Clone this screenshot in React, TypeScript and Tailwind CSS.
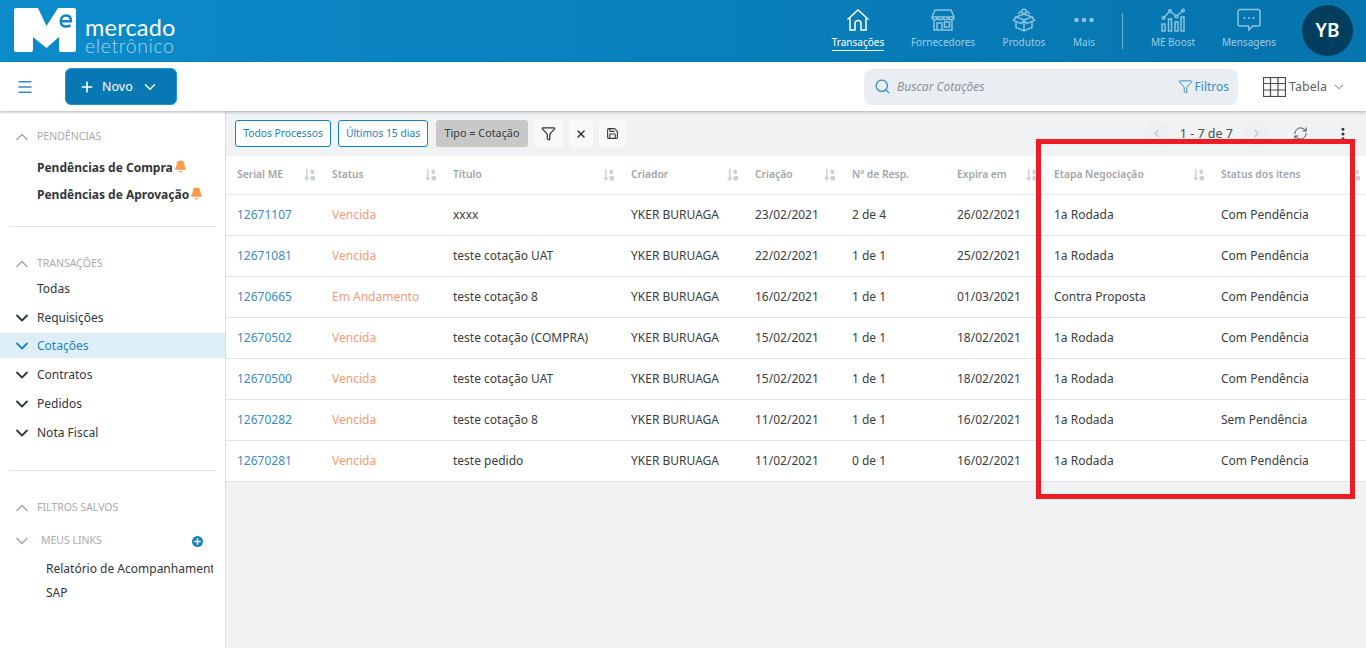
import React from 'react';
import {
  Menu,
  Plus,
  ChevronDown,
  ChevronUp,
  ChevronLeft,
  ChevronRight,
  Search,
  Funnel,
  X,
  Save,
  RefreshCw,
  EllipsisVertical,
  Bell,
} from 'lucide-react';

const rows = [
  ['12671107', 'Vencida', 'xxxx', '23/02/2021', '2 de 4', '26/02/2021', '1a Rodada', 'Com Pendência'],
  ['12671081', 'Vencida', 'teste cotação UAT', '22/02/2021', '1 de 1', '25/02/2021', '1a Rodada', 'Com Pendência'],
  ['12670665', 'Em Andamento', 'teste cotação 8', '16/02/2021', '1 de 1', '01/03/2021', 'Contra Proposta', 'Com Pendência'],
  ['12670502', 'Vencida', 'teste cotação (COMPRA)', '15/02/2021', '1 de 1', '18/02/2021', '1a Rodada', 'Com Pendência'],
  ['12670500', 'Vencida', 'teste cotação UAT', '15/02/2021', '1 de 1', '18/02/2021', '1a Rodada', 'Com Pendência'],
  ['12670282', 'Vencida', 'teste cotação 8', '11/02/2021', '1 de 1', '16/02/2021', '1a Rodada', 'Sem Pendência'],
  ['12670281', 'Vencida', 'teste pedido', '11/02/2021', '0 de 1', '16/02/2021', '1a Rodada', 'Com Pendência'],
];

const columns = [
  { label: 'Serial ME', sort: true },
  { label: 'Status', sort: true },
  { label: 'Título', sort: true },
  { label: 'Criador', sort: true },
  { label: 'Criação', sort: true },
  { label: 'Nº de Resp.', sort: false },
  { label: 'Expira em', sort: true },
  { label: 'Etapa Negociação', sort: true },
  { label: 'Status dos itens', sort: true },
];

const gridCols = 'grid grid-cols-[95px_121px_178px_124px_97px_105px_97px_167px_156px]';

const LogoMark = () => (
  <svg width="64" height="46" viewBox="0 0 64 46" className="shrink-0">
    <path
      d="M3 1H25L33.5 19L45 1H61a2 2 0 0 1 2 2V43a2 2 0 0 1-2 2H48a2 2 0 0 1-2-2V30L33.5 41L20 30V43a2 2 0 0 1-2 2H3a2 2 0 0 1-2-2V3a2 2 0 0 1 2-2Z"
      fill="#fff"
    />
    <path
      d="M47.8 14.2H58C58 10.5 56 8.5 53 8.5C49.9 8.5 47.8 10.7 47.8 14C47.8 17.5 50 19.6 53.2 19.6C55 19.6 56.4 19.1 57.4 18.3"
      fill="none"
      stroke="#0b87c6"
      strokeWidth="2.5"
    />
  </svg>
);

const HomeIcon = () => (
  <svg width="24" height="24" viewBox="0 0 24 24" fill="none" stroke="#fff" strokeWidth="1.5">
    <path d="M1.5 11.5L12 2L22.5 11.5" />
    <path d="M4 10V22H9V15.5a3 3 0 0 1 6 0V22H20V10" />
  </svg>
);

const StoreIcon = () => (
  <svg width="24" height="24" viewBox="0 0 24 24" fill="none" stroke="#8cc3e0" strokeWidth="1.5">
    <path d="M4 2H20L23 9H1Z" />
    <path d="M1 9a2.7 2.7 0 0 0 5.5 0a2.7 2.7 0 0 0 5.5 0a2.7 2.7 0 0 0 5.5 0a2.7 2.7 0 0 0 5.5 0" />
    <path d="M3 12V22H21V12" />
    <path d="M6 22V15H11V22M13.5 14H18.5V19H13.5Z" />
  </svg>
);

const BoxIcon = () => (
  <svg width="24" height="24" viewBox="0 0 24 24" fill="none" stroke="#8cc3e0" strokeWidth="1.5">
    <path d="M4 9L12 12L20 9L12 6Z" />
    <path d="M4 9L1.5 12.5L9.5 15.5L12 12L14.5 15.5L22.5 12.5L20 9" />
    <path d="M4 14V19.5L12 23L20 19.5V14M12 12V23" />
    <circle cx="12" cy="3.5" r="2.2" />
    <path d="M6 6L9 3M18 6L15 3" />
  </svg>
);

const BoostIcon = () => (
  <svg width="24" height="24" viewBox="0 0 24 24" fill="none" stroke="#8cc3e0" strokeWidth="1.5">
    <circle cx="2.5" cy="10" r="1.3" />
    <circle cx="9" cy="3" r="1.3" />
    <circle cx="15.5" cy="8.5" r="1.3" />
    <circle cx="22" cy="2.5" r="1.3" />
    <path d="M3.5 9L8 4M10 4L14.5 7.5M16.5 7.5L21 3.5" />
    <rect x="1" y="16" width="3" height="7" />
    <rect x="7.5" y="11" width="3" height="12" />
    <rect x="14" y="14" width="3" height="9" />
    <rect x="20" y="9" width="3" height="14" />
  </svg>
);

const MessageIcon = () => (
  <svg width="24" height="24" viewBox="0 0 24 24" fill="none" stroke="#8cc3e0" strokeWidth="1.5">
    <path d="M3 1.5H21a2 2 0 0 1 2 2V16a2 2 0 0 1-2 2H15.5L12 22L11.5 18H3a2 2 0 0 1-2-2V3.5a2 2 0 0 1 2-2Z" />
    <circle cx="7.5" cy="10" r="1.1" fill="#8cc3e0" stroke="none" />
    <circle cx="12" cy="10" r="1.1" fill="#8cc3e0" stroke="none" />
    <circle cx="16.5" cy="10" r="1.1" fill="#8cc3e0" stroke="none" />
  </svg>
);

const DotsIcon = () => (
  <svg width="24" height="24" viewBox="0 0 24 24" fill="#8cc3e0">
    <circle cx="4.5" cy="12" r="2.3" />
    <circle cx="12" cy="12" r="2.3" />
    <circle cx="19.5" cy="12" r="2.3" />
  </svg>
);

const SortIcon = () => (
  <svg width="11" height="12" viewBox="0 0 11 12" fill="#cfd1d4" className="shrink-0">
    <path d="M2 0H3.5V8.5H5.5L2.75 12L0 8.5H2Z" />
    <rect x="6.5" y="0.5" width="3.5" height="4.5" rx="1.5" />
    <rect x="6.5" y="7" width="4.5" height="4.5" rx="1" />
  </svg>
);

const TableIcon = () => (
  <svg width="23" height="20" viewBox="0 0 23 20" fill="none" stroke="#4b4b55" strokeWidth="1.2">
    <rect x="0.5" y="0.5" width="22" height="19" />
    <path d="M0.5 6.5H22.5M0.5 13H22.5M7.5 0.5V19.5M15 0.5V19.5" />
  </svg>
);

const NavItem = ({
  icon,
  label,
  width,
  active,
}: {
  icon: React.ReactNode;
  label: string;
  width: string;
  active?: boolean;
}) => (
  <div className={`flex flex-col items-center ${width}`}>
    <div className="h-[24px] mt-[8px]">{icon}</div>
    <span
      className={`mt-[3px] text-[10px] leading-[15px] whitespace-nowrap ${
        active ? 'text-white border-b border-white' : 'text-[#9ccbe5]'
      }`}
    >
      {label}
    </span>
  </div>
);

const SectionTitle = ({ label, className = '' }: { label: string; className?: string }) => (
  <div className={`flex items-center h-[20px] pl-[12px] ${className}`}>
    <ChevronUp size={20} strokeWidth={2} className="text-[#a9abaf]" />
    <span className="ml-[5px] text-[10.5px] text-[#a9abaf]">{label}</span>
  </div>
);

const MenuItem = ({ label, active }: { label: string; active?: boolean }) => (
  <div className={active ? 'h-[28px] pt-[1px]' : 'h-[29px] pt-[2px]'}>
    <div
      className={`flex items-center h-[25px] pl-[12px] ${
        active ? 'bg-[#deeef7] text-[#1d82c0]' : 'text-[#33363b]'
      }`}
    >
      <ChevronDown size={20} strokeWidth={2.2} className={active ? 'text-[#1d82c0]' : 'text-[#33363b]'} />
      <span className="ml-[5px] text-[12px]">{label}</span>
    </div>
  </div>
);

const PendingItem = ({ label }: { label: string }) => (
  <div className="flex items-center h-[27px] pl-[37px]">
    <span className="text-[12px] font-bold text-[#33363b]">{label}</span>
    <Bell size={13} fill="#fb9a4b" stroke="#fb9a4b" className="ml-[1px] -mt-[3px]" />
  </div>
);

export default function App() {
  return (
    <div className="relative h-[648px] w-[1366px] overflow-hidden bg-[#f1f2f4] font-['Noto_Sans',sans-serif]">
      {/* top bar */}
      <header className="flex h-[62px] items-start bg-gradient-to-r from-[#0c8bca] to-[#0674ad]">
        <div className="mt-[7px] ml-[13px]">
          <LogoMark />
        </div>
        <div className="ml-[8px] mt-[16px] font-['Lato',sans-serif] text-white">
          <div className="text-[23.5px] leading-[23px] tracking-[0.2px]">mercado</div>
          <div className="text-[19.5px] leading-[13px] font-light tracking-[0.6px] text-[#a7d6ee]">eletrônico</div>
        </div>
        <div className="ml-auto flex items-start">
          <NavItem icon={<HomeIcon />} label="Transações" width="w-[70px]" active />
          <NavItem icon={<StoreIcon />} label="Fornecedores" width="w-[100px]" />
          <NavItem icon={<BoxIcon />} label="Produtos" width="w-[62px]" />
          <NavItem icon={<DotsIcon />} label="Mais" width="w-[58px]" />
          <div className="mt-[13px] ml-[9px] h-[36px] w-px bg-[#6fb2d6]" />
          <NavItem icon={<BoostIcon />} label="ME Boost" width="w-[100px]" />
          <NavItem icon={<MessageIcon />} label="Mensagens" width="w-[52px]" />
          <div className="mt-[5px] ml-[27px] mr-[13px] flex h-[51px] w-[51px] items-center justify-center rounded-full bg-[#033e5e] text-[19px] font-semibold text-white">
            YB
          </div>
        </div>
      </header>

      {/* sub bar */}
      <div className="relative z-10 flex h-[49px] items-center bg-white shadow-[0_1px_3px_rgba(0,0,0,0.3)]">
        <Menu size={18} strokeWidth={2} className="ml-[16px] text-[#3f87c5]" />
        <button className="ml-[31px] flex h-[37px] w-[112px] items-center rounded-md border border-[#1c9ad6] bg-[#0878b4] pl-[13px] text-[12.5px] text-white">
          <Plus size={16} strokeWidth={2.5} />
          <span className="ml-[7px] mt-[1px]">Novo</span>
          <ChevronDown size={18} strokeWidth={2} className="ml-[8px]" />
        </button>
        <div className="ml-auto flex h-[36px] w-[374px] items-center rounded-lg bg-[#e8eef2] pl-[10px] pr-[9px]">
          <Search size={17} strokeWidth={1.8} className="text-[#3f87c5]" />
          <span className="ml-[6px] mt-[1px] text-[12px] italic text-[#8c9197]">Buscar Cotações</span>
          <Funnel size={15} strokeWidth={1.6} className="ml-auto text-[#3f87c5]" />
          <span className="ml-[2px] text-[12px] text-[#3f87c5]">Filtros</span>
        </div>
        <div className="ml-[25px] mr-[20px] flex items-center text-[#5d6066]">
          <TableIcon />
          <span className="ml-[3px] mt-[1px] text-[12.5px]">Tabela</span>
          <ChevronDown size={14} strokeWidth={1.5} className="ml-[5px]" />
        </div>
      </div>

      <div className="flex h-[537px]">
        {/* sidebar */}
        <aside className="w-[226px] shrink-0 border-r border-[#dcdde0] bg-white pt-[16px]">
          <SectionTitle label="PENDÊNCIAS" />
          <div className="mt-[7px]">
            <PendingItem label="Pendências de Compra" />
            <PendingItem label="Pendências de Aprovação" />
          </div>
          <div className="mx-[9px] mt-[18px] h-px bg-[#e2e3e5]" />
          <SectionTitle label="TRANSAÇÕES" className="mt-[27px]" />
          <div className="flex h-[29px] items-center pl-[37px] text-[12px] text-[#33363b]">Todas</div>
          <MenuItem label="Requisições" />
          <MenuItem label="Cotações" active />
          <MenuItem label="Contratos" />
          <MenuItem label="Pedidos" />
          <MenuItem label="Nota Fiscal" />
          <div className="mx-[9px] mt-[23px] h-px bg-[#e2e3e5]" />
          <SectionTitle label="FILTROS SALVOS" className="mt-[27px]" />
          <div className="mt-[13px] flex h-[20px] items-center pl-[12px] pr-[22px]">
            <ChevronDown size={20} strokeWidth={2} className="text-[#a9abaf]" />
            <span className="ml-[9px] text-[10.5px] text-[#a9abaf]">MEUS LINKS</span>
            <span className="ml-auto flex h-[11px] w-[11px] items-center justify-center rounded-full bg-[#1d82c0]">
              <Plus size={9} strokeWidth={3.5} className="text-white" />
            </span>
          </div>
          <div className="mt-[6px] w-[213px] overflow-hidden whitespace-nowrap pl-[46px] text-[12px] leading-[24px] text-[#33363b]">
            <div>Relatório de Acompanhamento</div>
            <div>SAP</div>
          </div>
        </aside>

        {/* main */}
        <main className="flex-1 min-w-0">
          <div className="flex h-[45px] items-center pl-[9px] pr-[15px]">
            <button className="h-[27px] w-[96px] rounded-[3px] border border-[#0b86c5] bg-white pt-[1px] text-[10.3px] text-[#1d7fb8]">
              Todos Processos
            </button>
            <button className="ml-[7px] h-[27px] w-[90px] rounded-[3px] border border-[#0b86c5] bg-white pt-[1px] text-[10.3px] text-[#1d7fb8]">
              Últimos 15 dias
            </button>
            <div className="ml-[8px] flex h-[27px] w-[92px] items-center justify-center rounded-[3px] bg-[#c8c8c8] text-[10.8px] text-[#3a3a3a]">
              Tipo = Cotação
            </div>
            <div className="ml-[6px] flex h-[27px] w-[29px] items-center justify-center rounded-[3px] bg-[#f8f9fa]">
              <Funnel size={15} strokeWidth={2} className="text-[#33363b]" />
            </div>
            <div className="ml-[6px] flex h-[27px] w-[24px] items-center justify-center rounded-[3px] bg-[#f8f9fa]">
              <X size={12} strokeWidth={3} className="text-[#33363b]" />
            </div>
            <div className="ml-[6px] flex h-[27px] w-[27px] items-center justify-center rounded-[3px] bg-[#f8f9fa]">
              <Save size={13} strokeWidth={2} className="text-[#33363b]" />
            </div>
            <div className="ml-auto flex items-center text-[#4a4d52]">
              <div className="flex h-[26px] w-[26px] items-center justify-center rounded-full bg-[#eeeff1]">
                <ChevronLeft size={13} className="text-[#c3c5c8]" />
              </div>
              <span className="mx-[10px] mt-[1px] text-[12.5px]">1 - 7 de 7</span>
              <div className="flex h-[26px] w-[26px] items-center justify-center rounded-full bg-[#eeeff1]">
                <ChevronRight size={13} className="text-[#c3c5c8]" />
              </div>
              <RefreshCw size={15} strokeWidth={1.6} className="ml-[24px]" />
              <EllipsisVertical size={16} strokeWidth={2.5} className="ml-[27px] text-[#33363b]" />
            </div>
          </div>

          <div className="bg-white">
            <div className={`${gridCols} h-[39px] items-center border-b border-[#e6e8f0]`}>
              {columns.map((c) => (
                <div key={c.label} className="flex items-center justify-between pl-[11px] pr-[6px]">
                  <span className="text-[10.3px] font-semibold whitespace-nowrap text-[#a3a5a9]">{c.label}</span>
                  {c.sort && <SortIcon />}
                </div>
              ))}
            </div>
            {rows.map((r) => (
              <div
                key={r[0]}
                className={`${gridCols} h-[41px] items-center border-b border-[#e2e3e5] text-[12px] text-[#3a3d42]`}
              >
                <div className="pl-[11px] text-[#3a8cc8]">{r[0]}</div>
                <div className="pl-[11px] text-[#fb9a76]">{r[1]}</div>
                <div className="pl-[11px]">{r[2]}</div>
                <div className="pl-[11px]">YKER BURUAGA</div>
                <div className="pl-[11px]">{r[3]}</div>
                <div className="pl-[11px]">{r[4]}</div>
                <div className="pl-[11px]">{r[5]}</div>
                <div className="pl-[11px]">{r[6]}</div>
                <div className="pl-[11px]">{r[7]}</div>
              </div>
            ))}
          </div>
        </main>
      </div>

      {/* red highlight drawn over the table */}
      <div className="absolute left-[1036px] top-[139px] z-20 h-[360px] w-[319px] border-[5px] border-[#ed1c24]" />
    </div>
  );
}
